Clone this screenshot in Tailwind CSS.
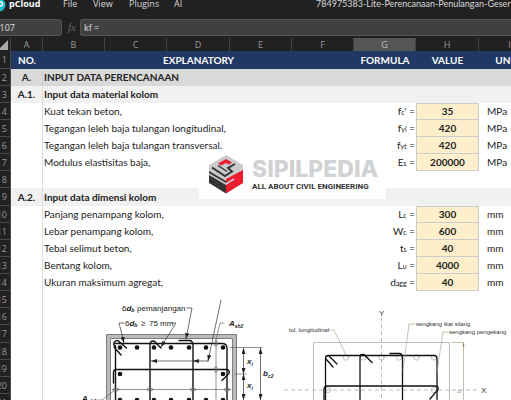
<!DOCTYPE html>
<html lang="id">
<head>
    <meta charset="UTF-8">
    <meta name="viewport" content="width=device-width, initial-scale=1.0">
    <title>784975383-Lite-Perencanaan-Penulangan-Geser-Kolom</title>
    <script src="https://cdn.jsdelivr.net/npm/@tailwindcss/browser@4"></script>
</head>
<body class="h-screen overflow-hidden bg-[#212121] font-['Lato','Noto_Sans',sans-serif] text-[10px] text-[#222]">
    <!-- Menu Bar -->
    <header class="flex h-[19px] items-start overflow-hidden whitespace-nowrap font-['Open_Sans','Noto_Sans',sans-serif] text-[9px] leading-[8px] text-[#d8d8d8]">
        <a href="#" class="flex w-[59px] shrink-0 font-bold text-[9px] text-white">
            <svg class="h-3 w-[9px] shrink-0" viewBox="0 0 9 12" aria-hidden="true">
                <circle cx="-1" cy="5" r="6.5" fill="#17bed0"/>
                <path d="M-2 2h2.5q2 0 2 2t-2 2H-2" fill="none" stroke="#fff" stroke-width="1.5"/>
            </svg>
            pCloud
        </a>
        <nav class="flex shrink-0">
            <a href="#" class="w-[30px] pl-1">File</a>
            <a href="#" class="w-9 pl-1">View</a>
            <a href="#" class="w-[45px] pl-1">Plugins</a>
            <a href="#" class="w-[146px] pl-1">AI</a>
        </nav>
        <div class="font-['Lato','Noto_Sans',sans-serif]">784975383-Lite-Perencanaan-Penulangan-Geser-Kolom.xlsx</div>
    </header>

    <!-- Formula Bar -->
    <div class="flex h-[17px] items-stretch font-['Open_Sans','Noto_Sans',sans-serif] text-[9px] text-[#e0e0e0]">
        <input aria-label="Name box" value="G107" class="-ml-6 w-[86px] rounded-[3px] border border-[#555] bg-[#404040] pl-4">
        <div class="w-[18px] pl-[6px] font-['Liberation_Serif',serif] text-[11px] leading-4 text-[#666] italic">fx</div>
        <input aria-label="Formula" value="kf =" class="min-w-0 flex-1 rounded-l-[3px] border border-r-0 border-[#555] bg-[#404040] pl-[3px]">
    </div>

    <!-- Sheet -->
    <main class="relative mt-0.5 overflow-hidden">
        <table class="-ml-4 w-[557px] table-fixed border-separate border-spacing-0 bg-white leading-[15px] whitespace-nowrap [&_td]:p-0 [&_th]:p-0 [&_sub]:bottom-0 [&_sub]:text-[7px] [&_sub]:leading-none">
            <colgroup>
                <col class="w-[27px]"><col class="w-8">
                <col class="w-[62px]"><col class="w-[62px]"><col class="w-[63px]"><col class="w-[62px]"><col class="w-[62px]">
                <col class="w-[62px]"><col class="w-[63px]"><col class="w-[62px]">
            </colgroup>
            <thead class="bg-[#212121] font-['Open_Sans','Noto_Sans',sans-serif] text-[9px] text-[#999] [&_th]:border-r [&_th]:border-[#444] [&_th]:font-normal">
                <tr class="h-[13px] leading-[13px]">
                    <th><svg class="ml-auto mr-0.5 h-2.5 w-2.5" viewBox="0 0 10 10" aria-hidden="true"><path d="M10 0v10H0z" fill="#aaa"/></svg></th>
                    <th>A</th><th>B</th><th>C</th><th>D</th><th>E</th><th>F</th>
                    <th class="bg-[#555] text-[#bbb]">G</th>
                    <th>H</th><th>I</th>
                </tr>
            </thead>
            <tbody class="[&_th]:border-r [&_th]:border-b [&_th]:border-[#4a4a4a] [&_th]:bg-[#212121] [&_th]:pr-[3px] [&_th]:text-right [&_th]:font-['Open_Sans','Noto_Sans',sans-serif] [&_th]:text-[9px] [&_th]:font-normal [&_th]:text-[#999]">
                <tr class="h-[18px] bg-[#1f3864] text-center font-bold text-white">
                    <th>1</th><td>NO.</td><td colspan="5">EXPLANATORY</td><td>FORMULA</td><td>VALUE</td><td>UNITS</td>
                </tr>
                <tr class="h-[17px] bg-[#d9d9d9] font-bold">
                    <th>2</th><td class="border-r border-[#ccc] text-center">A.</td><td colspan="8"><div class="pl-px">INPUT DATA PERENCANAAN</div></td>
                </tr>
                <tr class="h-[17px] bg-[#f1f1f1] font-bold">
                    <th>3</th><td class="border-r border-[#ddd] text-center">A.1.</td><td colspan="8"><div class="pl-px">Input data material kolom</div></td>
                </tr>
                <tr class="h-[17px]">
                    <th>4</th><td class="border-r border-[#ddd]"></td><td colspan="5"><div class="pl-px">Kuat tekan beton,</div></td>
                    <td class="text-right"><div class="pr-px">f<sub>c</sub>' =</div></td><td class="border border-[#ccc] bg-[#fdefcb] text-center font-bold">35</td><td><div class="pl-2">MPa</div></td>
                </tr>
                <tr class="h-[17px]">
                    <th>5</th><td class="border-r border-[#ddd]"></td><td colspan="5"><div class="pl-px">Tegangan leleh baja tulangan longitudinal,</div></td>
                    <td class="text-right"><div class="pr-px">f<sub>yl</sub> =</div></td><td class="border border-t-0 border-[#ccc] bg-[#fdefcb] text-center font-bold">420</td><td><div class="pl-2">MPa</div></td>
                </tr>
                <tr class="h-[17px]">
                    <th>6</th><td class="border-r border-[#ddd]"></td><td colspan="5"><div class="pl-px">Tegangan leleh baja tulangan transversal.</div></td>
                    <td class="text-right"><div class="pr-px">f<sub>yt</sub> =</div></td><td class="border border-t-0 border-[#ccc] bg-[#fdefcb] text-center font-bold">420</td><td><div class="pl-2">MPa</div></td>
                </tr>
                <tr class="h-[17px]">
                    <th>7</th><td class="border-r border-[#ddd]"></td><td colspan="5"><div class="pl-px">Modulus elastisitas baja,</div></td>
                    <td class="text-right"><div class="pr-px">E<sub>s</sub> =</div></td><td class="border border-t-0 border-[#ccc] bg-[#fdefcb] text-center font-bold">200000</td><td><div class="pl-2">MPa</div></td>
                </tr>
                <tr class="h-[17px]">
                    <th>8</th><td class="border-r border-[#ddd]"></td><td colspan="8"></td>
                </tr>
                <tr class="h-[18px] bg-[#f1f1f1] font-bold">
                    <th>9</th><td class="border-r border-[#ddd] text-center">A.2.</td><td colspan="8"><div class="pl-px">Input data dimensi kolom</div></td>
                </tr>
                <tr class="h-[17px]">
                    <th>10</th><td class="border-r border-[#ddd]"></td><td colspan="5"><div class="pl-px">Panjang penampang kolom,</div></td>
                    <td class="text-right"><div class="pr-px">L<sub>c</sub> =</div></td><td class="border border-[#ccc] bg-[#fdefcb] text-center font-bold">300</td><td><div class="pl-2">mm</div></td>
                </tr>
                <tr class="h-[17px]">
                    <th>11</th><td class="border-r border-[#ddd]"></td><td colspan="5"><div class="pl-px">Lebar penampang kolom,</div></td>
                    <td class="text-right"><div class="pr-px">W<sub>c</sub> =</div></td><td class="border border-t-0 border-[#ccc] bg-[#fdefcb] text-center font-bold">600</td><td><div class="pl-2">mm</div></td>
                </tr>
                <tr class="h-[17px]">
                    <th>12</th><td class="border-r border-[#ddd]"></td><td colspan="5"><div class="pl-px">Tebal selimut beton,</div></td>
                    <td class="text-right"><div class="pr-px">t<sub>s</sub> =</div></td><td class="border border-t-0 border-[#ccc] bg-[#fdefcb] text-center font-bold">40</td><td><div class="pl-2">mm</div></td>
                </tr>
                <tr class="h-[17px]">
                    <th>13</th><td class="border-r border-[#ddd]"></td><td colspan="5"><div class="pl-px">Bentang kolom,</div></td>
                    <td class="text-right"><div class="pr-px">L<sub>u</sub> =</div></td><td class="border border-t-0 border-[#ccc] bg-[#fdefcb] text-center font-bold">4000</td><td><div class="pl-2">mm</div></td>
                </tr>
                <tr class="h-[17px]">
                    <th>14</th><td class="border-r border-[#ddd]"></td><td colspan="5"><div class="pl-px">Ukuran maksimum agregat,</div></td>
                    <td class="text-right"><div class="pr-px">d<sub>agg</sub> =</div></td><td class="border border-t-0 border-[#ccc] bg-[#fdefcb] text-center font-bold">40</td><td><div class="pl-2">mm</div></td>
                </tr>
                <tr class="h-[17px]">
                    <th>15</th><td class="border-r border-[#ddd]"></td>
                    <td colspan="8" rowspan="7" class="align-top">
                        <svg class="block h-[119px] w-[498px]" viewBox="43 291 498 119" font-family="'Liberation Sans', sans-serif" fill="none" stroke-linecap="round">
                            <defs>
                                <marker id="arrow" viewBox="0 0 6 4" refX="6" refY="2" markerWidth="6" markerHeight="4" markerUnits="userSpaceOnUse" orient="auto-start-reverse">
                                    <path d="M0 0l6 2-6 2z" fill="#222"/>
                                </marker>
                            </defs>

                            <!-- Column section, left -->
                            <g stroke="#bbb"><path d="M108.500 420V336.500H234.500V420" stroke-width="4"/></g>
                            <g stroke="#666" stroke-width=".8"><path d="M106.500 420V334.500H236.500V420M110.500 420V338.500H232.500V420"/></g>
                            <g stroke="#111" stroke-width="1.400">
                                <path d="M115.500 420V346q-3-1-1-4 3-3 5 0l7 6M114 347l7 8M115.500 343.500H222q5 0 5 5V420"/>
                                <path d="M150 420V345q0-4 3-4 2 0 3 2l5 5"/>
                                <path d="M179 340.500h10q4 0 4 5V420"/>
                                <path d="M113.500 383V373q0-3.500 3-3.500H226q4 0 3 4l-7 7"/>
                            </g>
                            <g fill="#111">
                                <circle cx="120" cy="347.500" r="2.300"/><circle cx="137" cy="347.500" r="2.300"/><circle cx="154" cy="347.500" r="2.300"/><circle cx="171" cy="347.500" r="2.300"/>
                                <circle cx="189" cy="347.500" r="2.300"/><circle cx="206" cy="347.500" r="2.300"/><circle cx="223" cy="347.500" r="2.300"/>
                                <circle cx="120" cy="374" r="2.300"/><circle cx="223" cy="374" r="2.300"/>
                                <circle cx="120" cy="400" r="2.300"/><circle cx="137" cy="400" r="2.300"/><circle cx="154" cy="400" r="2.300"/><circle cx="171" cy="400" r="2.300"/>
                                <circle cx="189" cy="400" r="2.300"/><circle cx="206" cy="400" r="2.300"/><circle cx="223" cy="400" r="2.300"/>
                            </g>
                            <g stroke="#666" stroke-width=".7">
                                <path d="M112 389.500H231M216 339V420"/>
                                <ellipse cx="116" cy="389.500" rx="3" ry="1.500"/><ellipse cx="150" cy="389.500" rx="3" ry="1.500"/>
                                <ellipse cx="193" cy="389.500" rx="3" ry="1.500"/><ellipse cx="227" cy="389.500" rx="3" ry="1.500"/>
                                <ellipse cx="216" cy="343.500" rx="1.500" ry="3"/><ellipse cx="216" cy="369.500" rx="1.500" ry="3"/>
                                <path d="M230 347.500H262M235 374H246M224 323h-4l-4 17M97 400h5l13-10"/>
                            </g>
                            <g stroke="#333" stroke-width=".7">
                                <path d="M151 361H192" marker-start="url(#arrow)"/>
                                <path d="M208 361H193" marker-end="url(#arrow)"/>
                                <path d="M221 300l-13 61" marker-end="url(#arrow)"/>
                                <path d="M187 308h5l-6 31" marker-end="url(#arrow)"/>
                                <path d="M124 323h-5l5 20" marker-end="url(#arrow)"/>
                                <path d="M172 323h4l-15 24" marker-end="url(#arrow)"/>
                                <path d="M243.500 348V374" marker-start="url(#arrow)" marker-end="url(#arrow)"/>
                                <path d="M243.500 374V400" marker-start="url(#arrow)" marker-end="url(#arrow)"/>
                                <path d="M260.500 348V400" marker-start="url(#arrow)" marker-end="url(#arrow)"/>
                            </g>
                            <g fill="#222" font-size="8">
                                <text x="122" y="311">6<tspan font-weight="bold" font-style="italic">d<tspan font-size="5" dy="1">b</tspan></tspan></text>
                                <text x="137" y="311">pemanjangan</text>
                                <text x="125" y="326">6<tspan font-weight="bold" font-style="italic">d<tspan font-size="5" dy="1">b</tspan></tspan></text>
                                <text x="141" y="326">≥</text>
                                <text x="149" y="326">75 mm</text>
                                <g font-weight="bold" font-style="italic">
                                    <text x="229" y="326">A<tspan font-size="5" dy="2">sh2</tspan></text>
                                    <text x="82" y="401">A<tspan font-size="5" dy="2">sh1</tspan></text>
                                    <text x="247" y="364">x<tspan font-size="5" dy="2">i</tspan></text>
                                    <text x="247" y="388">x<tspan font-size="5" dy="2">i</tspan></text>
                                    <text x="263" y="376">b<tspan font-size="5" dy="2">c2</tspan></text>
                                </g>
                            </g>

                            <!-- Column section, right -->
                            <path d="M313.500 420V342.500H449.500V420" stroke="#bbb"/>
                            <path d="M381.500 317V420M284 390H478" stroke="#bbb" stroke-dasharray="4 3" stroke-linecap="butt"/>
                            <g stroke="#aaa" stroke-width=".7">
                                <circle cx="346" cy="357.500" r="2.700"/><circle cx="363" cy="357.500" r="2.700"/><circle cx="381.500" cy="357.500" r="2.700"/>
                                <circle cx="399" cy="357.500" r="2.700"/><circle cx="416.500" cy="357.500" r="2.700"/><circle cx="434" cy="357.500" r="2.700"/>
                                <circle cx="328" cy="390" r="2.700"/><circle cx="434" cy="390" r="2.700"/>
                            </g>
                            <g stroke="#111" stroke-width="1.300">
                                <path d="M325.500 420V358q0-2.500 3-2.500H434q3 0 3 3V420"/>
                                <path d="M326 359l7 8M329 356l8 8"/>
                                <path d="M360 420V357q0-2.500 3-2.500 1.500 0 2 1l7 7"/>
                                <path d="M390 353.500h9q3.500 0 3.500 4V420"/>
                                <path d="M324 420V390q0-4 3-4H435q4 0 3 3.500L430 399"/>
                            </g>
                            <g stroke="#b3a28e" stroke-width=".7">
                                <path d="M329 330h5l12 25M415 324h-6l-6 46M448 332h-5l-6 40"/>
                                <path d="M452 342.500h12M463.500 343V420"/>
                            </g>
                            <path d="M463.500 342.500l-1 4h2z" fill="#947c5b"/>
                            <g fill="#333" font-size="6">
                                <text x="289" y="332">tul. longitudinal</text>
                                <text x="416" y="326">sengkang ikat silang</text>
                                <text x="449" y="334">sengkang pengekang</text>
                                <text x="379" y="316" font-size="8">Y</text>
                                <text x="481" y="393" font-size="8">X</text>
                                <text x="461" y="393" fill="#888" transform="rotate(-90 461 393)">b</text>
                            </g>
                        </svg>
                    </td>
                </tr>
                <tr class="h-[17px]"><th>16</th><td class="border-r border-[#ddd]"></td></tr>
                <tr class="h-[18px]"><th>17</th><td class="border-r border-[#ddd]"></td></tr>
                <tr class="h-[17px]"><th>18</th><td class="border-r border-[#ddd]"></td></tr>
                <tr class="h-[17px]"><th>19</th><td class="border-r border-[#ddd]"></td></tr>
                <tr class="h-[17px]"><th>20</th><td class="border-r border-[#ddd]"></td></tr>
                <tr class="h-[17px]"><th>21</th><td class="border-r border-[#ddd]"></td></tr>
            </tbody>
        </table>

        <!-- Logo floating over the cells -->
        <div class="absolute top-[114px] left-[199px] flex h-[47px] w-[187px] gap-2 bg-white pt-px pl-[9px] whitespace-nowrap">
            <svg class="h-[41px] w-9 shrink-0" viewBox="0 0 36 41" aria-hidden="true">
                <path d="M18 2l17 10v8L18 30 1 20v-8z" fill="#c9cbcc"/>
                <path d="M1 18l17 10v12.500L1 30z" fill="#333436"/>
                <path d="M35 17v13L18 40.500V26z" fill="#ed1c2e"/>
                <path d="M18 6l-8 4.500 3 2 5-2.500 3 1.500 3-2z" fill="#ed1c2e"/>
                <path d="M27 11l-7 4 4 3.500-7 4.500L4 14.500" fill="none" stroke="#333436" stroke-width="2"/>
                <path d="M10 12.500l9 6" stroke="#333436" stroke-width="1.500"/>
                <path d="M1 21l17 10 8-5" fill="none" stroke="#c9cbcc" stroke-width="1.500"/>
            </svg>
            <div class="pt-[3px]">
                <div class="font-['Inter',sans-serif] text-[23px] leading-[27px] font-extrabold text-[#d0d2d3]">SIPILPEDIA</div>
                <div class="font-['Roboto',sans-serif] text-[8px] leading-[8px] font-bold text-[#333]">ALL ABOUT CIVIL ENGINEERING</div>
            </div>
        </div>
    </main>
</body>
</html>
